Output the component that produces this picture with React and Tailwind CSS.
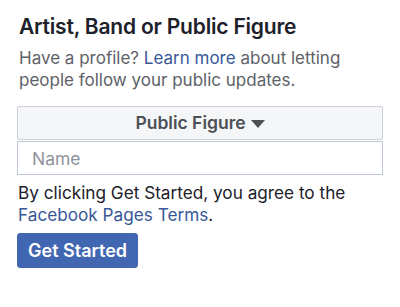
export default function App() {
  return (
    <div className="w-[400px] h-[307px] bg-white px-[17px] pt-[15px] font-['Inter','Liberation_Sans',Arial,sans-serif]">
      <h2 className="text-[21px] leading-[24px] font-semibold tracking-[-0.2px] text-[#1d2129] pl-[2px]">Artist, Band or Public Figure</h2>
      <p className="mt-[8px] w-[350px] text-[17px] leading-[22px] text-[#5d6168] pl-[2px]">
        Have a profile? <span className="text-[#385898]">Learn more</span> about letting people follow your public updates.
      </p>

      <div className="mt-[15px] w-[366px]">
        <button className="w-full h-[34px] flex items-center justify-center gap-[5px] bg-[#f5f6f7] border border-[#ccd0d5] rounded-[2px] text-[17.5px] font-semibold text-[#4b4f56]">
          Public Figure
          <svg width="14" height="8" viewBox="0 0 14 8" className="mt-[1px]">
            <path d="M0 0h14L7 8z" fill="#4b4f56" />
          </svg>
        </button>
        <input
          placeholder="Name"
          className="mt-[1px] w-full h-[34px] px-[14px] border border-[#bdc7d8] text-[17.5px] text-[#1d2129] placeholder:text-[#90949c] outline-none"
        />
      </div>

      <p className="mt-[7px] w-[360px] text-[17.2px] leading-[22px] text-[#1d2129] pl-[1px]">
        By clicking Get Started, you agree to the <span className="text-[#385898]">Facebook Pages Terms</span>.
      </p>

      <button className="mt-[7px] h-[35px] px-[10px] bg-[#4267b2] border border-[#4267b2] rounded-[3px] text-white text-[18px] font-semibold">
        Get Started
      </button>
    </div>
  );
}
